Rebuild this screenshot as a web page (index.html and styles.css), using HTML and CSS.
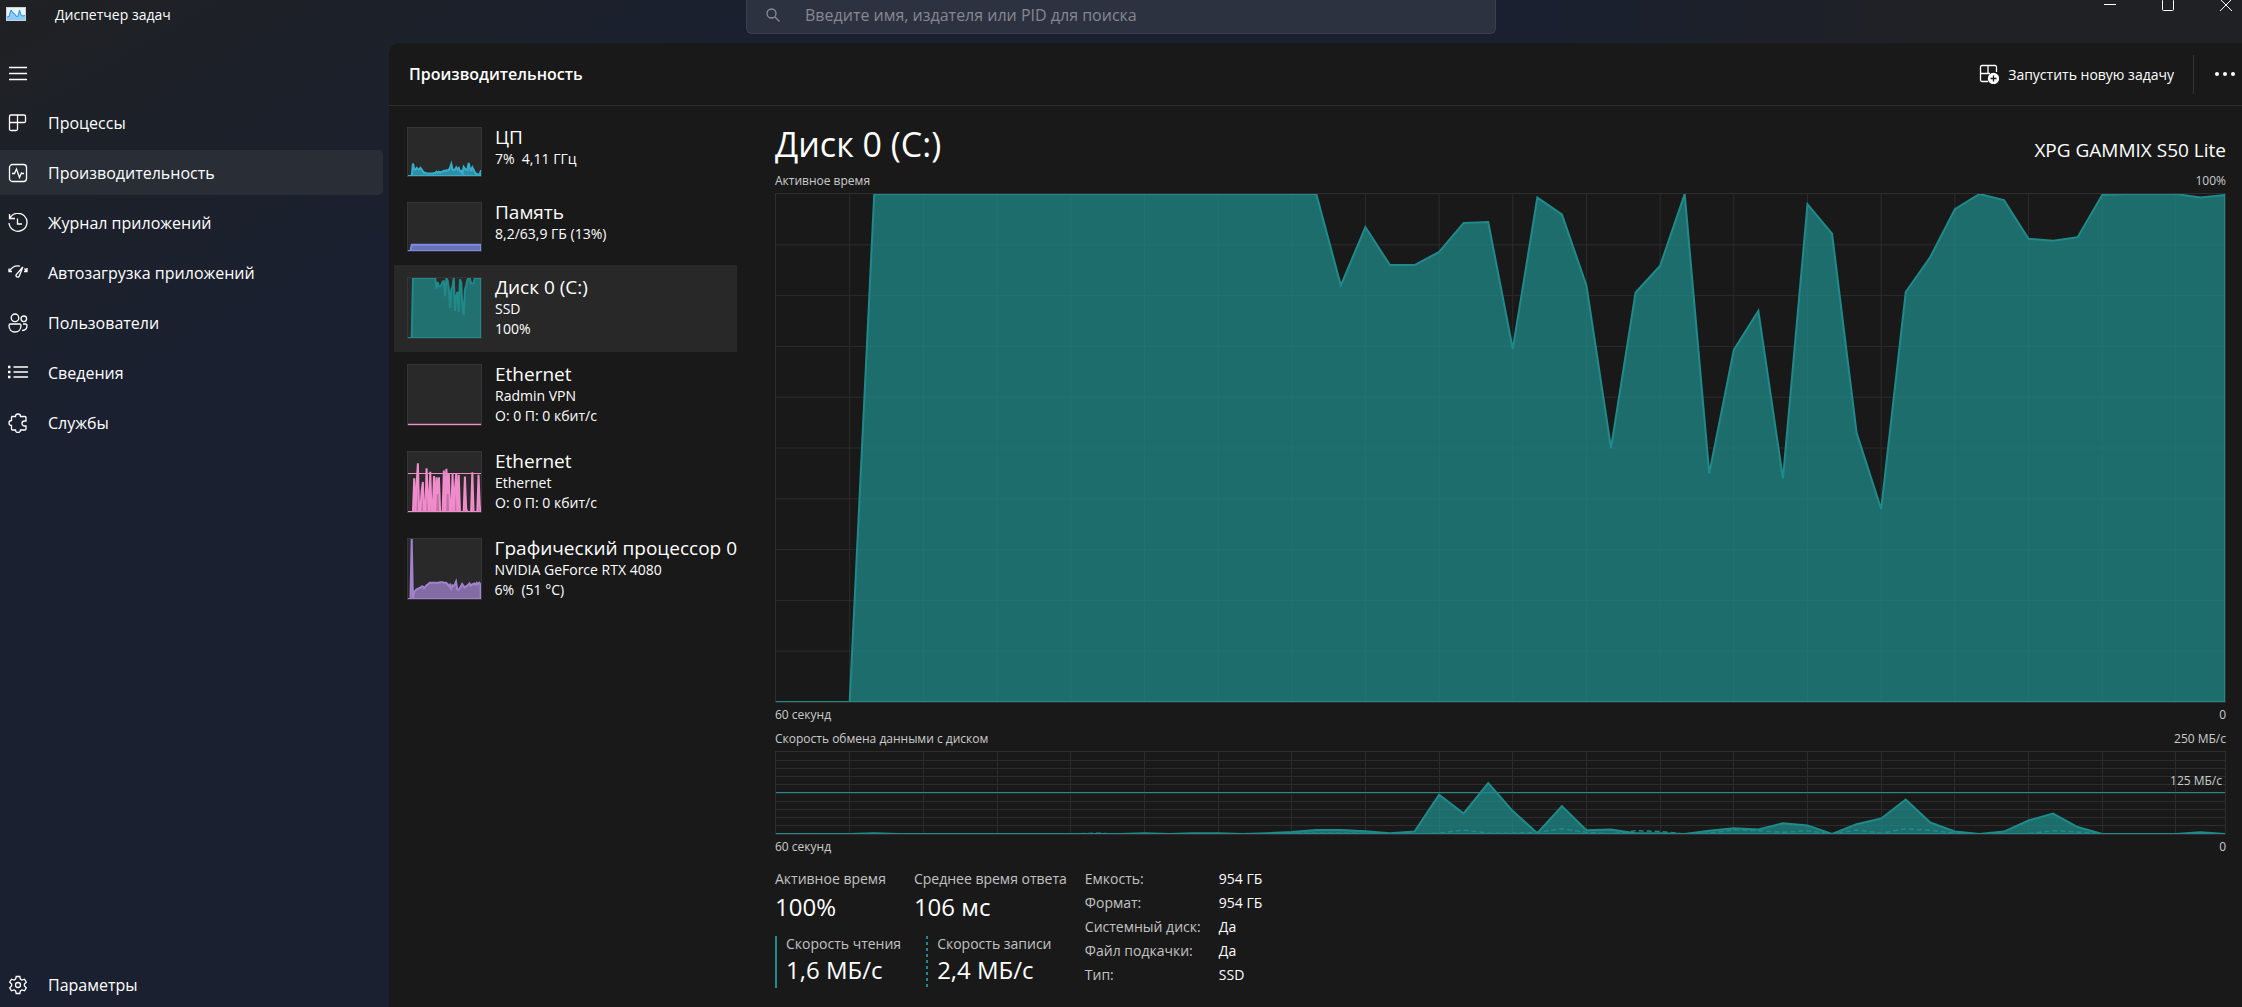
FILE: index.html
```html
<!DOCTYPE html>
<html lang="ru">
<head>
  <meta charset="UTF-8">
  <meta name="viewport" content="width=device-width, initial-scale=1">
  <title>Диспетчер задач</title>
  <link rel="stylesheet" href="styles.css">
</head>
<body>

<header class="titlebar">
  <div class="app-name">
    <svg class="app-icon" viewBox="0 0 20 14" aria-hidden="true">
      <rect width="20" height="14" fill="#c9d3dc"/>
      <rect x="1" y="1" width="18" height="12" fill="#eaf4fb"/>
      <path d="M1 13V10l2-.5L5 3l2 3 1.500.5L10 9l2 .5L13.500 3l1.500 5 2 1 2-.5V13z" fill="#8ccbf5"/>
      <path d="M1 10l2-.5L5 3l2 3 1.500.5L10 9l2 .5L13.500 3l1.500 5 2 1 2-.5" fill="none" stroke="#2a8fe0"/>
    </svg>
    <span>Диспетчер задач</span>
  </div>
  <div class="search">
    <svg class="search-icon" viewBox="0 0 16 16" aria-hidden="true"><circle cx="6.500" cy="6.500" r="4.500"/><path d="M10 10l4.500 4.500"/></svg>
    <input type="search" aria-label="Поиск" placeholder="Введите имя, издателя или PID для поиска">
  </div>
  <div class="window-buttons">
    <button type="button" aria-label="Свернуть"><svg viewBox="0 0 14 14"><path d="M1 6.500h12"/></svg></button>
    <button type="button" aria-label="Развернуть"><svg viewBox="0 0 14 14"><rect x="1.500" y="1.500" width="11" height="11" rx="1"/></svg></button>
    <button type="button" aria-label="Закрыть"><svg viewBox="0 0 14 14"><path d="M1 1l12 12M13 1L1 13"/></svg></button>
  </div>
</header>

<div class="layout">
  <nav class="sidebar">
    <button class="menu-btn" type="button" aria-label="Открыть навигацию">
      <svg class="icon" viewBox="0 0 20 20"><path d="M1 4.500h18M1 10.500h18M1 16.500h18"/></svg>
    </button>
    <a class="nav-item" href="#processes">
      <svg class="icon" viewBox="0 0 20 20"><path d="M3 2h13a1.500 1.500 0 0 1 1.500 1.500v4A1.500 1.500 0 0 1 16 9.500H9.500V16A1.500 1.500 0 0 1 8 17.500H3.500A1.500 1.500 0 0 1 1.500 16V3.500A1.500 1.500 0 0 1 3 2zM9.500 2v7.500M1.500 9.500h8"/></svg>
      <span>Процессы</span>
    </a>
    <a class="nav-item active" href="#performance">
      <svg class="icon" viewBox="0 0 20 20"><rect x="1.500" y="1.500" width="17" height="17" rx="3"/><path d="M4 10.500h2.500L8.500 6l3 8.500L13.500 10l1 .5H16"/></svg>
      <span>Производительность</span>
    </a>
    <a class="nav-item" href="#history">
      <svg class="icon" viewBox="0 0 20 20"><path d="M1.500 1v4.500H7M1.800 5.500A9 9 0 1 1 1 10M9.500 5.500v5.500h4.500"/></svg>
      <span>Журнал приложений</span>
    </a>
    <a class="nav-item" href="#startup">
      <svg class="icon" viewBox="0 0 20 20"><path d="M1 8.500C4 4 8 2 12 3.200M1 5.500v3h3M16.500 5.500L19 8.500M19 5v3.500h-3M14.800 4l-3.500 9a1.700 1.700 0 0 1-3.200-1.200z"/></svg>
      <span>Автозагрузка приложений</span>
    </a>
    <a class="nav-item" href="#users">
      <svg class="icon" viewBox="0 0 20 20"><circle cx="7" cy="4.800" r="3.800"/><circle cx="15.800" cy="5.800" r="2.800"/><path d="M2.500 11h9a1.500 1.500 0 0 1 1.500 1.500c0 4-2.500 6.500-6 6.500s-6-2.500-6-6.500A1.500 1.500 0 0 1 2.500 11zM15 11h2.500a1.500 1.500 0 0 1 1.500 1.500c0 3-2 5-5 5"/></svg>
      <span>Пользователи</span>
    </a>
    <a class="nav-item" href="#details">
      <svg class="icon" viewBox="0 0 20 20"><path d="M5.500 4H20M5.500 9H20M5.500 14H20"/><path class="dots" d="M0 4h2.500M0 9h2.500M0 14h2.500"/></svg>
      <span>Сведения</span>
    </a>
    <a class="nav-item" href="#services">
      <svg class="icon" viewBox="0 0 20 20"><path d="M4 3.500h3.500a2.500 2.500 0 0 1 5 0H17a1 1 0 0 1 1 1V8h-1.500a2.500 2.500 0 0 0 0 5H18v3a1 1 0 0 1-1 1h-4.500a2.500 2.500 0 0 1-5 0H4.500a1 1 0 0 1-1-1v-3.500a2.500 2.500 0 0 1 0-5V4.500z"/></svg>
      <span>Службы</span>
    </a>
    <a class="nav-item settings" href="#settings">
      <svg class="icon" viewBox="0 0 20 20"><circle cx="10" cy="10" r="2.500"/><path d="M8.200 1.500h3.600l.6 2.600 1.500.9 2.600-.8 1.800 3-1.900 1.900v1.800l1.900 1.900-1.800 3-2.600-.8-1.500.9-.6 2.600H8.200l-.6-2.600-1.500-.9-2.600.8-1.800-3 1.900-1.900V9.100L1.700 7.200l1.800-3 2.600.8 1.500-.9z"/></svg>
      <span>Параметры</span>
    </a>
  </nav>

  <main class="content">
    <div class="page-head">
      <h1>Производительность</h1>
      <div class="page-actions">
        <button class="run-btn" type="button">
          <svg class="icon" viewBox="0 0 20 20"><path d="M17.500 8V3A1.500 1.500 0 0 0 16 1.500H3A1.500 1.500 0 0 0 1.500 3v13A1.500 1.500 0 0 0 3 17.500h6M9 1.500v8M1.500 9.500H11"/><circle class="badge" cx="14.500" cy="14.500" r="5"/><path class="plus" d="M14.500 11.500v6M11.500 14.500h6"/></svg>
          Запустить новую задачу
        </button>
        <button class="more-btn" type="button" aria-label="Дополнительно">
          <svg viewBox="0 0 20 4"><circle cx="2" cy="2" r="2"/><circle cx="10" cy="2" r="2"/><circle cx="18" cy="2" r="2"/></svg>
        </button>
      </div>
    </div>

    <div class="performance">
      <div class="resources">
        <a class="resource" href="#cpu">
          <svg class="thumb short" id="thumb-cpu" preserveAspectRatio="none"></svg>
          <div><h2>ЦП</h2><p>7%&nbsp; 4,11 ГГц</p></div>
        </a>
        <a class="resource" href="#memory">
          <svg class="thumb short" id="thumb-memory" preserveAspectRatio="none"></svg>
          <div><h2>Память</h2><p>8,2/63,9 ГБ (13%)</p></div>
        </a>
        <a class="resource selected" href="#disk">
          <svg class="thumb" id="thumb-disk" preserveAspectRatio="none"></svg>
          <div><h2>Диск 0 (C:)</h2><p>SSD</p><p>100%</p></div>
        </a>
        <a class="resource" href="#radmin">
          <svg class="thumb" id="thumb-radmin" preserveAspectRatio="none"></svg>
          <div><h2>Ethernet</h2><p>Radmin VPN</p><p>О: 0 П: 0 кбит/с</p></div>
        </a>
        <a class="resource" href="#ethernet">
          <svg class="thumb" id="thumb-ethernet" preserveAspectRatio="none"></svg>
          <div><h2>Ethernet</h2><p>Ethernet</p><p>О: 0 П: 0 кбит/с</p></div>
        </a>
        <a class="resource" href="#gpu">
          <svg class="thumb" id="thumb-gpu" preserveAspectRatio="none"></svg>
          <div><h2>Графический процессор 0</h2><p>NVIDIA GeForce RTX 4080</p><p>6%&nbsp; (51 °C)</p></div>
        </a>
      </div>

      <section class="detail">
        <div class="detail-head">
          <h2>Диск 0 (C:)</h2>
          <span>XPG GAMMIX S50 Lite</span>
        </div>

        <div class="scale"><span>Активное время</span><span>100%</span></div>
        <svg class="chart chart-main" id="chart-active" preserveAspectRatio="none"></svg>
        <div class="scale"><span>60 секунд</span><span>0</span></div>

        <div class="scale"><span>Скорость обмена данными с диском</span><span>250 МБ/с</span></div>
        <div class="chart-wrap">
          <svg class="chart" id="chart-speed" preserveAspectRatio="none"></svg>
          <span class="chart-mark">125 МБ/с</span>
        </div>
        <div class="scale"><span>60 секунд</span><span>0</span></div>

        <div class="stats">
          <div class="counters">
            <div class="counter-row">
              <div class="counter"><span>Активное время</span><strong>100%</strong></div>
              <div class="counter"><span>Среднее время ответа</span><strong>106 мс</strong></div>
            </div>
            <div class="counter-row speeds">
              <div class="counter read"><span>Скорость чтения</span><strong>1,6 МБ/с</strong></div>
              <div class="counter write"><span>Скорость записи</span><strong>2,4 МБ/с</strong></div>
            </div>
          </div>
          <table class="props">
            <tr><th scope="row">Емкость:</th><td>954 ГБ</td></tr>
            <tr><th scope="row">Формат:</th><td>954 ГБ</td></tr>
            <tr><th scope="row">Системный диск:</th><td>Да</td></tr>
            <tr><th scope="row">Файл подкачки:</th><td>Да</td></tr>
            <tr><th scope="row">Тип:</th><td>SSD</td></tr>
          </table>
        </div>
      </section>
    </div>
  </main>
</div>

<script src="script.js"></script>
</body>
</html>
```
FILE: styles.css
```css
* { box-sizing: border-box; }
body {
  margin: 0;
  min-height: 100vh;
  display: flex;
  flex-direction: column;
  font-family: "Segoe UI", "Open Sans", "Noto Sans", sans-serif;
  font-size: 14px;
  color: #fff;
  background:
    linear-gradient(90deg, rgba(32,33,36,0) 68%, #202124 88%),
    linear-gradient(150deg, #1f2123 0, #1a2030 420px);
}
h1, h2, p { margin: 0; font-weight: 400; }
a { color: inherit; text-decoration: none; }
button {
  font: inherit;
  color: inherit;
  background: none;
  border: none;
  padding: 0;
}
svg { display: block; fill: none; stroke: #fff; }

/* title bar */
.titlebar {
  height: 43px;
  display: grid;
  grid-template-columns: 1fr 750px 1fr;
  align-items: start;
}
.app-name {
  display: flex;
  align-items: center;
  gap: 29px;
  height: 28px;
  padding-left: 6px;
}
.app-icon { width: 20px; height: 14px; stroke: none; }
.search {
  display: flex;
  align-items: center;
  gap: 24px;
  height: 34px;
  padding: 0 18px 4px;
  background: #2d3241;
  border: 1px solid #3a3f4d;
  border-top: none;
  border-radius: 0 0 6px 6px;
}
.search-icon { width: 16px; height: 16px; stroke: #8a8d95; stroke-width: 1.3; }
.search input {
  flex: 1;
  padding: 0;
  border: none;
  outline: none;
  background: none;
  font: inherit;
  font-size: 16px;
  color: #fff;
}
.search input::placeholder { color: #858891; opacity: 1; }
.window-buttons {
  display: flex;
  justify-content: flex-end;
  gap: 44px;
  padding-right: 9px;
}
.window-buttons button { height: 12px; overflow: hidden; display: flex; align-items: flex-end; }
.window-buttons svg { width: 14px; height: 14px; }

/* sidebar */
.layout { flex: 1; display: flex; }
.sidebar {
  width: 389px;
  display: flex;
  flex-direction: column;
  gap: 5px;
  padding: 7px 6px 0 0;
}
.icon { width: 20px; height: 20px; stroke-width: 1.3; }
.icon .dots { stroke-width: 2.5; }
.menu-btn {
  display: flex;
  align-items: center;
  height: 45px;
  padding-left: 8px;
}
.nav-item {
  display: flex;
  align-items: center;
  gap: 20px;
  height: 45px;
  padding-left: 8px;
  border-radius: 0 5px 5px 0;
  font-size: 16px;
}
.nav-item.active { background: #292d36; }
.settings { margin-top: auto; }

/* content */
.content {
  flex: 1;
  display: flex;
  flex-direction: column;
  background: #191919;
  border-top-left-radius: 10px;
}
.page-head {
  display: flex;
  justify-content: space-between;
  align-items: center;
  height: 63px;
  padding: 0 7px 0 20px;
  border-bottom: 1px solid #2e2e2e;
}
.page-head h1 { font-size: 16px; font-weight: 600; }
.page-actions { display: flex; align-items: center; }
.run-btn {
  display: flex;
  align-items: center;
  gap: 9px;
  height: 39px;
  padding-right: 19px;
  border-right: 1px solid #333;
}
.badge { fill: #fff; }
.plus { stroke: #191919; }
.more-btn { padding-left: 21px; }
.more-btn svg { width: 20px; height: 4px; fill: #fff; stroke: none; }

.performance { flex: 1; display: flex; }
.resources { width: 348px; padding: 9px 0 0 5px; }
.resource {
  display: flex;
  gap: 13px;
  padding: 12px 0 13px 13px;
  white-space: nowrap;
}
.resource.selected { background: #282828; }
.resource h2 { font-size: 19px; line-height: 20px; padding-bottom: 2px; }
.resource p { line-height: 20px; }
.resource div { height: 62px; }
.resource .short + div { height: 50px; }
.thumb {
  width: 75px;
  height: 62px;
  background: #292929;
  border: 1px solid #353535;
}
.thumb.short { height: 50px; }

/* selected resource */
.detail {
  flex: 1;
  display: flex;
  flex-direction: column;
  padding: 14px 16px 19px 38px;
}
.detail-head {
  display: flex;
  justify-content: space-between;
  align-items: baseline;
  padding-bottom: 1px;
  font-size: 19px;
}
.detail-head h2 { font-size: 34px; line-height: 48px; }
.scale {
  display: flex;
  justify-content: space-between;
  font-size: 12px;
  line-height: 24px;
  color: #ccc;
}
.chart { width: 100%; height: 84px; border: 1px solid #2e2e2e; }
/* takes whatever height the rest of the column leaves */
.chart-main { flex: 1 1 0; height: 0; min-height: 240px; contain: size; }
.chart-wrap { position: relative; }
.chart-mark {
  position: absolute;
  top: 20px;
  right: 4px;
  font-size: 12px;
  line-height: 20px;
  color: #ccc;
}
.grid { stroke: #2c2c2c; shape-rendering: crispEdges; }
.area { stroke-width: 2; fill-opacity: .75; }
.cpu { stroke: #36aecb; fill: #36aecb; }
.memory { stroke: #7c8ae6; fill: #7c8ae6; }
.disk { stroke: #208a8a; fill: #208a8a; }
.net { stroke: #f08ccb; fill: #f08ccb; }
.gpu { stroke: #a182cc; fill: #a182cc; }
.limit { fill: none; stroke-width: 1.2; }
.dashed { fill: none; stroke-width: 1.5; stroke-dasharray: 5 3; }

.stats {
  display: flex;
  gap: 18px;
  padding-top: 8px;
}
.counters { display: flex; flex-direction: column; gap: 13px; }
.counter-row { display: flex; gap: 28px; }
.counter { display: flex; flex-direction: column; }
.counter span { line-height: 24px; color: #c3c3c3; }
.counter strong { font-size: 24px; line-height: 32px; font-weight: 400; }
.speeds { gap: 25px; }
.speeds .counter { padding-left: 11px; }
.speeds .counter span { line-height: 16px; }
.speeds .counter strong { line-height: 36px; }
.read { background: linear-gradient(#208a8a, #208a8a) left / 2px 100% no-repeat; }
.write { background: repeating-linear-gradient(#208a8a 0 3px, transparent 3px 6px) left / 2px 100% no-repeat; }
.props { border-collapse: collapse; align-self: flex-start; }
.props th, .props td {
  padding: 0;
  line-height: 24px;
  text-align: left;
  font-weight: 400;
}
.props th { width: 134px; color: #c3c3c3; }
```
FILE: script.js
```js
// one value per second, oldest first, percent of the chart height
const active = [0, 0, 0, 0, 100, 100, 100, 100, 100, 100, 100, 100, 100, 100, 100, 100, 100, 100, 100, 100,
  100, 100, 100, 82, 93.5, 86, 86, 88.6, 94.3, 94.5, 69.5, 99.3, 96, 82, 50, 80.6, 85.9, 100, 45, 69.3,
  77, 44, 98, 92.2, 53, 38, 80.7, 87.6, 97, 100, 98.8, 91.2, 90.8, 91.5, 99.8, 100, 100, 100, 99.3, 99.8];
const read = [0, 0, 0, 0, 1, 0, 0, 0, 0, 0, 0, 0, 0, 0, 0, 1, 0, 1, 1, 0,
  1, 2.5, 5, 5, 3.5, 1, 3, 48, 25, 62, 28, 1, 34, 4.5, 5.5, 1, 1, 0, 4, 7,
  5.5, 13, 10.5, 0, 12, 19, 42, 14, 3, 0, 3, 16.5, 25, 8.5, 0, 0, 0, 0, 2, 0];
const write = [0, 0, 0, 0, 0, 0, 0, 0, 0, 0, 0, 0, 0, 1, 0, 0, 0, 0, 0, 0,
  0, 1, 1, 1, 1, 0, 0, 1, 5, 1, 1, 2, 6.5, 2, 0, 4, 3, 0, 1, 5,
  4, 2, 4, 0, 5, 1, 6.5, 4.5, 1, 0, 0, 0.5, 4, 2.5, 0, 0, 0, 0, 0, 0];
const cpu = [0, 0, 0, 0, 26, 14, 13, 17, 14, 14, 17, 14, 10, 6, 7, 5, 5, 5, 5, 5,
  5, 6, 6, 9, 7, 9, 7, 9, 9, 11, 10, 12, 11, 13, 17, 25, 13, 12, 14, 18,
  14, 17, 10, 11, 4, 19, 16, 13, 12, 27, 16, 12, 18, 13, 8, 5, 4, 3, 4, 12];
const memory = Array(60).fill(13).fill(0, 0, 3);
const ethernet = [0, 0, 0, 0, 0, 56, 0, 48, 81, 0, 0, 35, 50, 0, 0, 73, 30, 0, 67, 0,
  0, 60, 0, 58, 30, 58, 0, 0, 0, 69, 0, 72, 30, 65, 0, 0, 65, 0, 40, 65,
  0, 62, 0, 0, 0, 0, 59, 5, 0, 0, 0, 0, 66, 0, 0, 0, 0, 62, 10, 0];
const gpu = [0, 0, 0, 100, 0, 12, 14, 16, 17, 18, 19, 21, 21, 18, 20, 23, 24, 26, 27, 27,
  27, 27, 27, 27, 27, 27, 28, 28, 28, 27, 27, 27, 25, 22, 24, 15, 23, 22, 24, 29,
  16, 15, 18, 21, 25, 22, 19, 21, 22, 24, 26, 22, 24, 25, 26, 24, 27, 25, 27, 24];

function line(values) {
  return values.map((v, i) => `${i},${100 - v}`).join(" ");
}

function area(values, cls) {
  return `<polygon class="area ${cls}" vector-effect="non-scaling-stroke" points="0,100 ${line(values)} 59,100"/>`;
}

function limit(y, cls) {
  return `<path class="limit ${cls}" vector-effect="non-scaling-stroke" d="M0 ${100 - y}H59"/>`;
}

function grid() {
  let d = "";
  for (let x = 3; x < 59; x += 3) d += `M${x} 0V100`;
  for (let y = 10; y < 100; y += 10) d += `M0 ${y}H59`;
  return `<path class="grid" vector-effect="non-scaling-stroke" d="${d}"/>`;
}

function draw(id, content) {
  const svg = document.getElementById(id);
  svg.setAttribute("viewBox", "0 0 59 100");
  svg.innerHTML = content;
}

draw("chart-active", grid() + area(active, "disk"));
draw("chart-speed", grid() + area(read, "disk") + limit(50.6, "disk") +
  `<polyline class="dashed disk" vector-effect="non-scaling-stroke" points="${line(write)}"/>`);
draw("thumb-cpu", area(cpu, "cpu"));
draw("thumb-memory", area(memory, "memory"));
draw("thumb-disk", area(active, "disk"));
draw("thumb-radmin", limit(1, "net"));
draw("thumb-ethernet", area(ethernet, "net") + limit(64.2, "net"));
draw("thumb-gpu", area(gpu, "gpu"));
```
